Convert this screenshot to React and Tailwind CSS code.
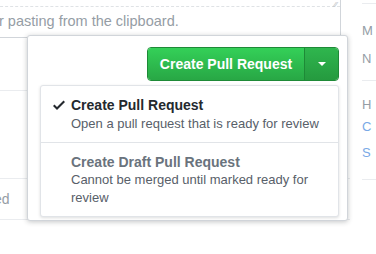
import React from 'react';

const Check = () => (
  <svg viewBox="0 0 12 16" width="12" height="16" className="fill-[#24292e]">
    <path fillRule="evenodd" d="M12 5l-8 8-4-4 1.5-1.5L4 10l6.5-6.5L12 5z" />
  </svg>
);

const App = () => {
  return (
    <div
      className="relative w-[376px] h-[254px] overflow-hidden bg-white"
      style={{ fontFamily: '"Liberation Sans", Arial, sans-serif' }}
    >
      {/* Page behind the popover */}
      <div className="flex">
        <div className="w-[350px] shrink-0">
          <div className="relative -ml-4 mr-[9px] h-[38px] border border-t-0 border-[#d1d5da] rounded-b-[3px] bg-white">
            <div className="border-b border-dashed border-[#dfe2e5] h-[7px]" />
            <div className="pl-[14px] pt-[6px] text-[14.5px] leading-[16px] text-[#959da5] whitespace-nowrap">
              r pasting from the clipboard.
            </div>
            <div className="absolute right-[3px] top-[1px] text-[8px] leading-none text-[#b0b5bb]">⁄⁄</div>
          </div>
          <div className="mt-[52px] border-t border-[#eaecef] mr-[10px]" />
          <div className="h-[88px] border-b border-[#eaecef]" />
          <div className="h-[41px] border-b border-[#eaecef] flex items-center text-[14px] text-[#959da5]">
            <span className="-ml-[6px]">ed</span>
          </div>
        </div>
        <div className="flex-1 pl-[12px] text-[13px] text-[#959da5]">
          <div className="border-t border-[#eaecef] mt-[3px] h-[18px]" />
          <div className="h-[20px] leading-[20px]">M</div>
          <div className="mt-[8px] h-[20px] leading-[20px]">N</div>
          <div className="mt-[11px] border-t border-[#eaecef]" />
          <div className="mt-[14px] h-[20px] leading-[20px]">H</div>
          <div className="h-[20px] leading-[20px] mt-[2px] text-[#79a9e6]">C</div>
          <div className="h-[20px] leading-[20px] mt-[6px] text-[#79a9e6]">S</div>
          <div className="mt-[16px] border-t border-[#eaecef]" />
        </div>
      </div>

      {/* Popover */}
      <div className="absolute left-[27px] top-[35px] w-[321px] h-[186px] bg-white border border-[#d1d5da] rounded-[3px] shadow-[0_1px_5px_rgba(27,31,35,0.25)]">
        <div className="flex justify-end pt-[11px] pr-[8px]">
          <div className="flex h-[34px] rounded-[4px] overflow-hidden border border-[#1e8a37]">
            <div className="flex items-center w-[156px] justify-center whitespace-nowrap text-white font-bold text-[14px] bg-gradient-to-b from-[#34d058] to-[#28a745]">
              Create Pull Request
            </div>
            <div className="w-[34px] flex items-center justify-center border-l border-[#1e8a37] bg-gradient-to-b from-[#2fb64e] to-[#259a3f]">
              <div className="w-0 h-0 border-l-[4px] border-r-[4px] border-t-[4px] border-l-transparent border-r-transparent border-t-white" />
            </div>
          </div>
        </div>

        <div className="mt-[4px] ml-[12px] mr-[8px] border border-[#e1e4e8] rounded-[3px] bg-white shadow-[0_1px_3px_rgba(27,31,35,0.15)]">
          <div className="flex pt-[10px] pb-[8px] border-b border-[#e1e4e8]">
            <div className="w-[30px] flex justify-end pr-[6px] pt-[1px]">
              <Check />
            </div>
            <div className="flex-1">
              <div className="text-[14px] leading-[18px] font-bold text-[#24292e]">Create Pull Request</div>
              <div className="text-[13px] leading-[20px] text-[#586069] font-medium">
                Open a pull request that is ready for review
              </div>
            </div>
          </div>
          <div className="flex pt-[10px] pb-[9px]">
            <div className="w-[30px]" />
            <div className="w-[252px]">
              <div className="text-[14px] leading-[18px] font-bold text-[#6a737d]">Create Draft Pull Request</div>
              <div className="text-[13px] leading-[18px] text-[#586069]">
                Cannot be merged until marked ready for review
              </div>
            </div>
          </div>
        </div>
      </div>
    </div>
  );
};

export default App;
